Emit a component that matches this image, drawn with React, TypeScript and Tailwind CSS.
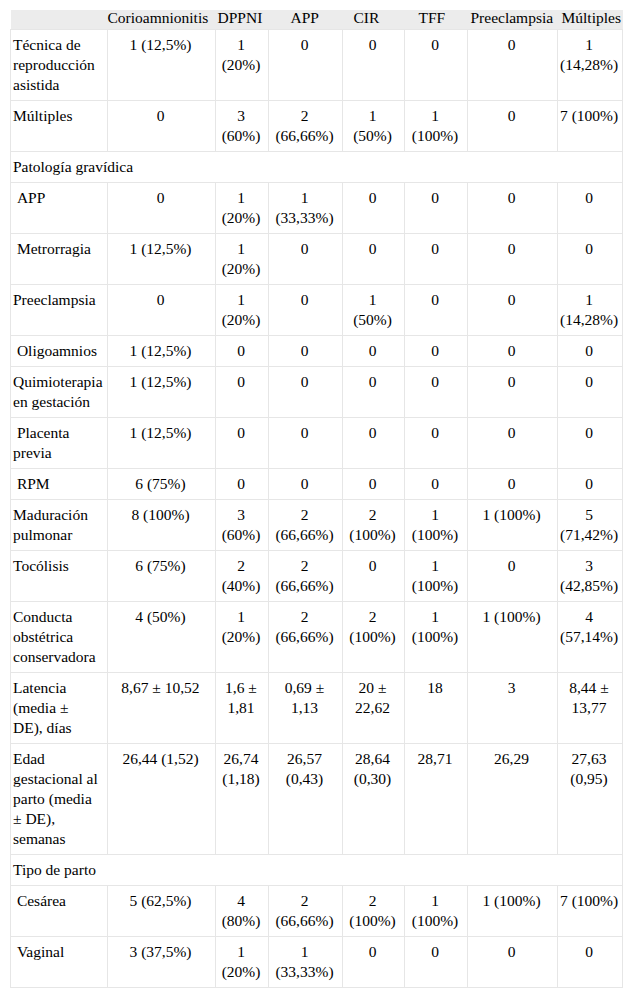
import React from "react";

type Row = { span: string } | { cells: string[] };

const NB = "\u00a0";

const rows: Row[] = [
  { cells: ["Técnica de\nreproducción\nasistida", "1 (12,5%)", "1\n(20%)", "0", "0", "0", "0", "1\n(14,28%)"] },
  { cells: ["Múltiples", "0", "3\n(60%)", "2\n(66,66%)", "1\n(50%)", "1\n(100%)", "0", "7 (100%)"] },
  { span: "Patología gravídica" },
  { cells: [NB + "APP", "0", "1\n(20%)", "1\n(33,33%)", "0", "0", "0", "0"] },
  { cells: [NB + "Metrorragia", "1 (12,5%)", "1\n(20%)", "0", "0", "0", "0", "0"] },
  { cells: ["Preeclampsia", "0", "1\n(20%)", "0", "1\n(50%)", "0", "0", "1\n(14,28%)"] },
  { cells: [NB + "Oligoamnios", "1 (12,5%)", "0", "0", "0", "0", "0", "0"] },
  { cells: ["Quimioterapia\nen gestación", "1 (12,5%)", "0", "0", "0", "0", "0", "0"] },
  { cells: [NB + "Placenta\nprevia", "1 (12,5%)", "0", "0", "0", "0", "0", "0"] },
  { cells: [NB + "RPM", "6 (75%)", "0", "0", "0", "0", "0", "0"] },
  { cells: ["Maduración\npulmonar", "8 (100%)", "3\n(60%)", "2\n(66,66%)", "2\n(100%)", "1\n(100%)", "1 (100%)", "5\n(71,42%)"] },
  { cells: ["Tocólisis", "6 (75%)", "2\n(40%)", "2\n(66,66%)", "0", "1\n(100%)", "0", "3\n(42,85%)"] },
  { cells: ["Conducta\nobstétrica\nconservadora", "4 (50%)", "1\n(20%)", "2\n(66,66%)", "2\n(100%)", "1\n(100%)", "1 (100%)", "4\n(57,14%)"] },
  { cells: ["Latencia\n(media ±\nDE), días", "8,67 ± 10,52", "1,6 ±\n1,81", "0,69 ±\n1,13", "20 ±\n22,62", "18", "3", "8,44 ±\n13,77"] },
  { cells: ["Edad\ngestacional al\nparto (media\n± DE),\nsemanas", "26,44 (1,52)", "26,74\n(1,18)", "26,57\n(0,43)", "28,64\n(0,30)", "28,71", "26,29", "27,63\n(0,95)"] },
  { span: "Tipo de parto" },
  { cells: [NB + "Cesárea", "5 (62,5%)", "4\n(80%)", "2\n(66,66%)", "2\n(100%)", "1\n(100%)", "1 (100%)", "7 (100%)"] },
  { cells: [NB + "Vaginal", "3 (37,5%)", "1\n(20%)", "1\n(33,33%)", "0", "0", "0", "0"] },
];

const headers: { t: string; cls: string }[] = [
  { t: "", cls: "pl-0" },
  { t: "Corioamnionitis", cls: "pl-0" },
  { t: "DPPNI", cls: "pl-[2px]" },
  { t: "APP", cls: "pl-[22px]" },
  { t: "CIR", cls: "pl-[11px]" },
  { t: "TFF", cls: "pl-[14px]" },
  { t: "Preeclampsia", cls: "pl-[3px]" },
  { t: "Múltiples", cls: "pl-[4px]" },
];

const colClasses = ["w-[97px]", "w-[108px]", "w-[53px]", "w-[74px]", "w-[62px]", "w-[63px]", "w-[90px]", "w-[65px]"];

export default function App() {
  return (
    <div className="bg-white w-[632px] min-h-[991px] pt-[10px] pl-[10px] text-black text-[15.5px] font-['Liberation_Serif','Times_New_Roman',serif]">
      <table className="table-fixed border-collapse w-[612px]">
        <colgroup>
          {colClasses.map((c, i) => (
            <col key={i} className={c} />
          ))}
        </colgroup>
        <thead>
          <tr className="bg-[#ececec]">
            {headers.map((h, i) => (
              <th
                key={i}
                className={
                  "font-normal text-left align-top leading-[15px] pt-0 pb-[4px] pr-0 whitespace-nowrap " +
                  h.cls
                }
              >
                {h.t}
              </th>
            ))}
          </tr>
        </thead>
        <tbody>
          {rows.map((r, i) =>
            "span" in r ? (
              <tr key={i}>
                <td
                  colSpan={8}
                  className="border border-[#e6e6e6] text-left align-top leading-[20px] py-[5px] pl-[2px] pr-[4px]"
                >
                  {r.span}
                </td>
              </tr>
            ) : (
              <tr key={i}>
                {r.cells.map((c, j) => (
                  <td
                    key={j}
                    className={
                      "border border-[#e6e6e6] align-top leading-[20px] py-[5px] whitespace-pre " +
                      (j === 0 ? "text-left pl-[2px] pr-0" : "text-center pl-[2px] pr-[4px]")
                    }
                  >
                    {c}
                  </td>
                ))}
              </tr>
            )
          )}
        </tbody>
      </table>
    </div>
  );
}
